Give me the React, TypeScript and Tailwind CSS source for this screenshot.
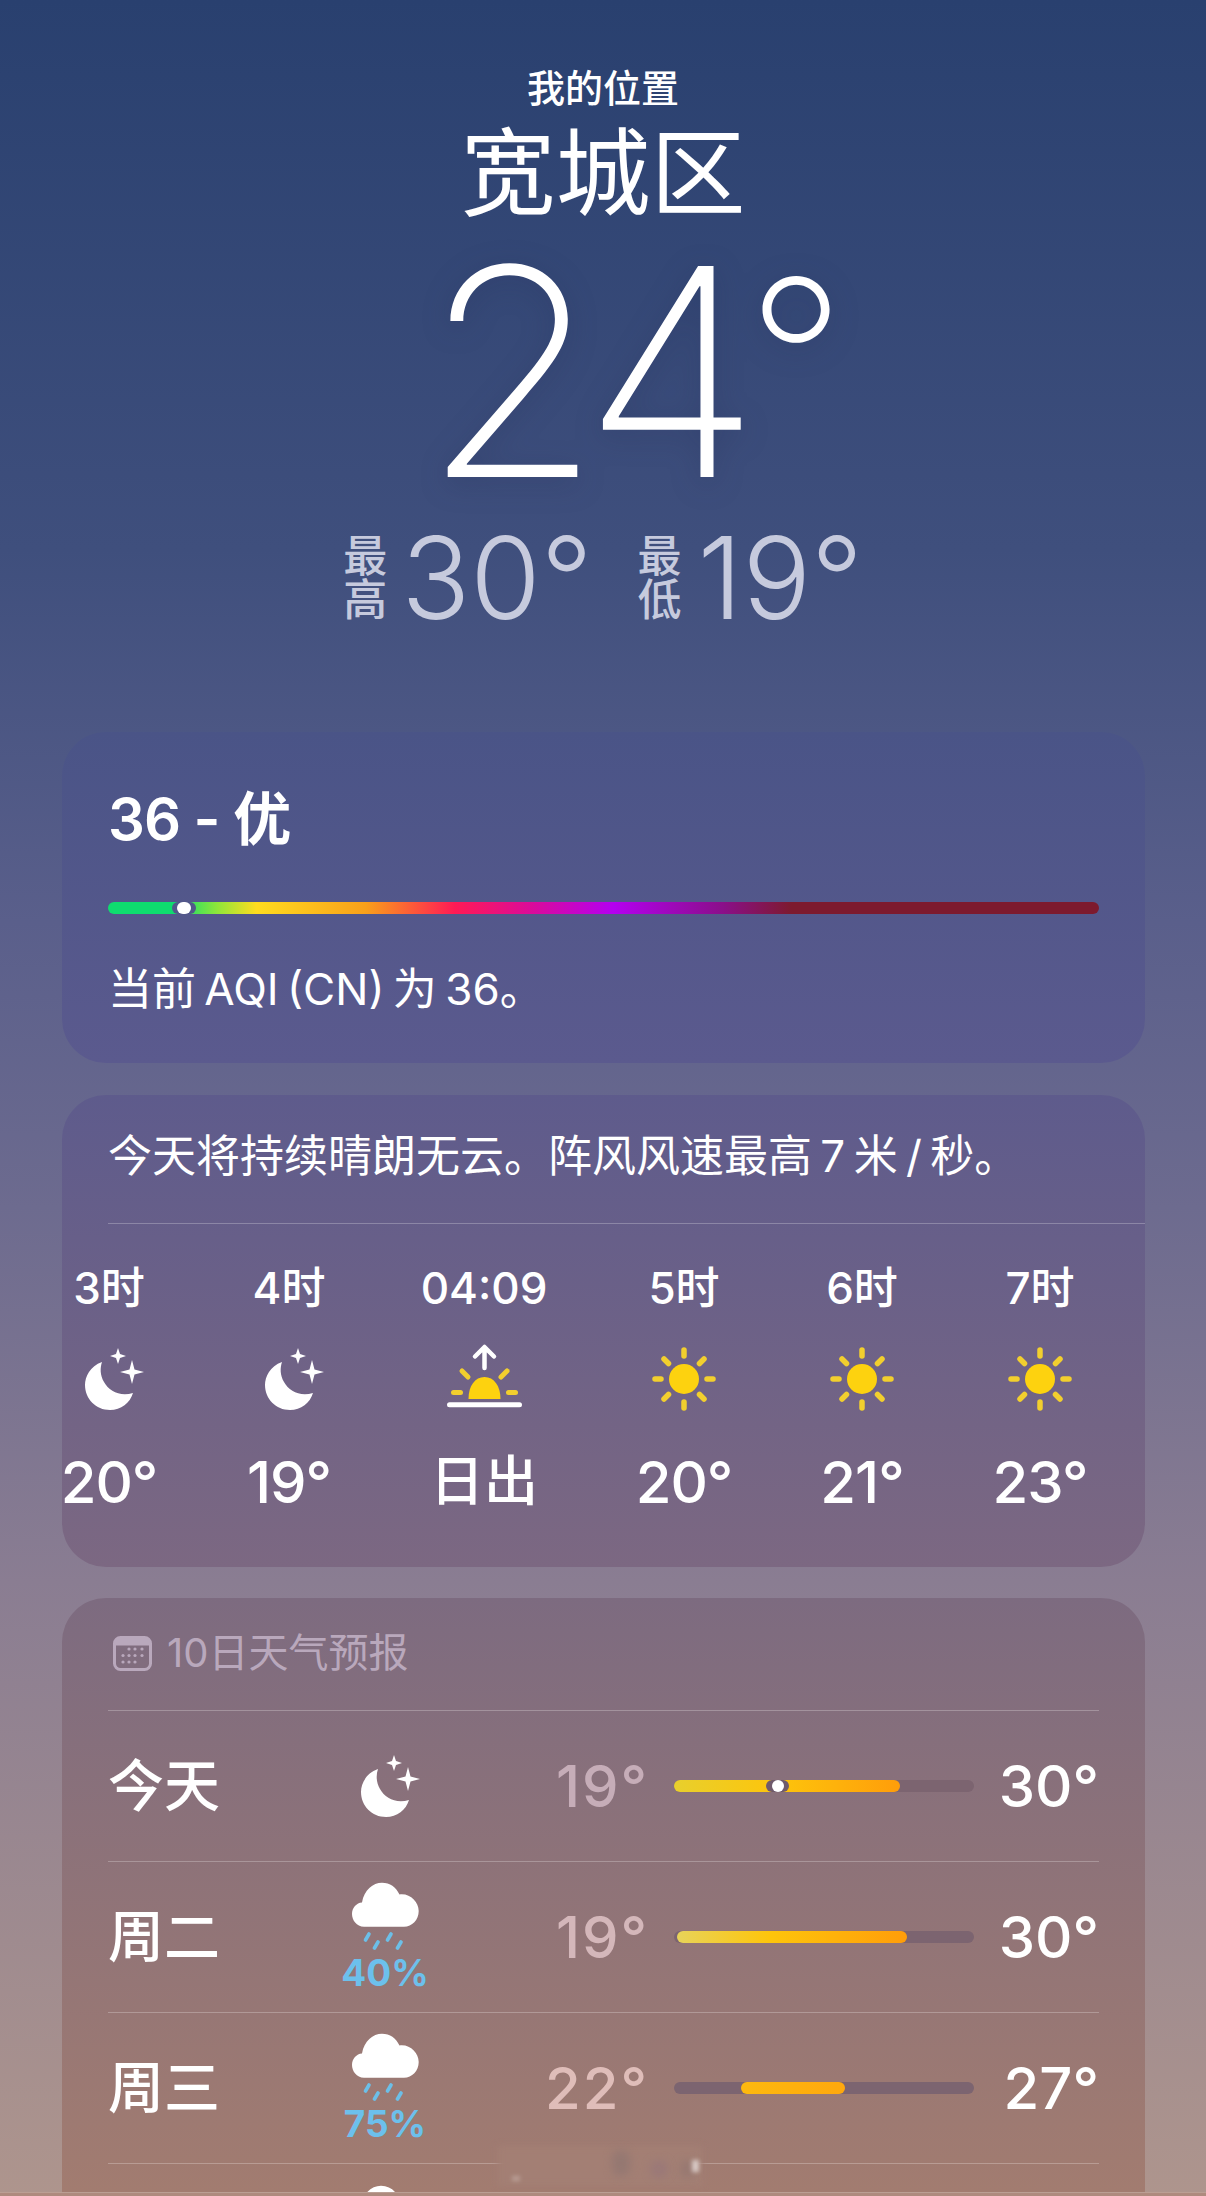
const FONT = 'font-["Inter","Noto_Sans_CJK_SC",sans-serif]';

type Hour = { label: string; icon: 'moon' | 'sunrise' | 'sun'; temp: string; width: string };

const hours: Hour[] = [
  { label: '3时', icon: 'moon', temp: '20°', width: 'w-[94px]' },
  { label: '4时', icon: 'moon', temp: '19°', width: 'w-[94px] ml-[86px]' },
  { label: '04:09', icon: 'sunrise', temp: '日出', width: 'w-[140px] ml-[78px]' },
  { label: '5时', icon: 'sun', temp: '20°', width: 'w-[94px] ml-[83px]' },
  { label: '6时', icon: 'sun', temp: '21°', width: 'w-[94px] ml-[84px]' },
  { label: '7时', icon: 'sun', temp: '23°', width: 'w-[94px] ml-[84px]' },
];

function MoonIcon() {
  return (
    <svg width="72" height="64" viewBox="3 8 72 64" fill="white">
      <path d="M32 23 C20 27 15 38 15 46 C15 60 26 71 40 71 C51 71 60 64 63 54 C50 58 39 52 34 43 C30 36 30 29 32 23 Z" />
      <path d="M48 9 L50 15 L56 17 L50 19 L48 25 L46 19 L40 17 L46 15 Z" />
      <path d="M62 21 L64.5 30.5 L74 33 L64.5 35.5 L62 45 L59.5 35.5 L50 33 L59.5 30.5 Z" />
    </svg>
  );
}

function SunIcon() {
  return (
    <svg width="66" height="66" viewBox="0 0 66 66" fill="none">
      <circle cx="33" cy="33" r="15" fill="#fdd20f" />
      <g stroke="#f2cf2e" strokeWidth="5.5" strokeLinecap="round">
        <path d="M33 4 V10" />
        <path d="M33 56 V62" />
        <path d="M4 33 H10" />
        <path d="M56 33 H62" />
        <path d="M13 13 L17.5 17.5" />
        <path d="M48.5 48.5 L53 53" />
        <path d="M13 53 L17.5 48.5" />
        <path d="M48.5 17.5 L53 13" />
      </g>
    </svg>
  );
}

function SunriseIcon() {
  return (
    <svg width="81" height="72" viewBox="23 4 81 72" fill="none">
      <path d="M47.5 60 C47.5 47 54 38 63.5 38 C73 38 79.5 47 79.5 60 Z" fill="#fdd20f" />
      <g stroke="#f2cf2e" strokeWidth="5" strokeLinecap="round">
        <path d="M32.5 53.5 H39.5" />
        <path d="M87.5 53.5 H94.5" />
        <path d="M41 32 L47 38" />
        <path d="M86 32 L80 38" />
      </g>
      <path d="M63.5 29 V9 M54 17.5 L63.5 8 L73 17.5" stroke="white" strokeWidth="4.5" strokeLinecap="round" strokeLinejoin="round" />
      <path d="M28.5 65.7 H98.5" stroke="white" strokeWidth="5" strokeLinecap="round" />
    </svg>
  );
}

function RainCloud() {
  return (
    <svg width="67" height="68" viewBox="34 22 67 68" fill="none">
      <path
        d="M46 66.7 C38.5 66.7 34 60 34 54 C34 47.5 38.5 43 44 42.5 C46 30 55 22.7 64 22.7 C72 22.7 78 27 81.5 34.5 C92 33 100.7 42 100.7 51 C100.7 60 94 66.7 86 66.7 Z"
        fill="white"
      />
      <g stroke="#6cbfe8" strokeWidth="3.6" strokeLinecap="round">
        <path d="M51 74 L47.5 80" />
        <path d="M73 74 L69.5 80" />
        <path d="M60 82 L56.5 88" />
        <path d="M83 82 L79.5 88" />
      </g>
    </svg>
  );
}

function CalendarIcon() {
  return (
    <svg width="39" height="35" viewBox="0 0 39 35" className="text-[#b9a8bc]" fill="none">
      <rect x="1.5" y="1.5" width="36" height="32" rx="6" stroke="currentColor" strokeWidth="3" />
      <path d="M3 3 H36 V9.5 H3 Z" fill="currentColor" />
      <g fill="currentColor">
        <circle cx="16" cy="13" r="1.6" />
        <circle cx="22" cy="13" r="1.6" />
        <circle cx="29" cy="13" r="1.6" />
        <circle cx="10" cy="19.5" r="1.6" />
        <circle cx="16" cy="19.5" r="1.6" />
        <circle cx="22" cy="19.5" r="1.6" />
        <circle cx="29" cy="19.5" r="1.6" />
        <circle cx="10" cy="26" r="1.6" />
        <circle cx="16" cy="26" r="1.6" />
        <circle cx="22" cy="26" r="1.6" />
      </g>
    </svg>
  );
}

function HourColumn({ hour }: { hour: Hour }) {
  return (
    <div className={`${hour.width} flex flex-col items-center shrink-0`}>
      <div className="h-[44px] text-[44px] leading-[44px] font-medium text-white whitespace-nowrap">{hour.label}</div>
      <div className="h-[66px] mt-[36px] flex items-center justify-center">
        {hour.icon === 'moon' && <MoonIcon />}
        {hour.icon === 'sun' && <SunIcon />}
        {hour.icon === 'sunrise' && <SunriseIcon />}
      </div>
      <div
        className={`mt-[39px] leading-[62px] font-medium text-white whitespace-nowrap ${
          hour.icon === 'sunrise' ? 'text-[54px]' : 'text-[58px] tracking-[-1px]'
        }`}
      >
        {hour.temp}
      </div>
    </div>
  );
}

function DayRow({
  day,
  low,
  high,
  lowColor,
  pop,
  children,
}: {
  day: string;
  low: string;
  high: string;
  lowColor: string;
  pop?: string;
  children: React.ReactNode;
}) {
  return (
    <div className="h-[151px] border-t-[1.5px] border-white/25 flex items-center">
      <div className="w-[217px] text-[56px] font-medium text-white">{day}</div>
      <div className="w-[120px] flex flex-col items-center">
        {pop ? (
          <>
            <RainCloud />
            <div className="mt-[4px] text-[37px] leading-[38px] font-bold text-[#6cc0ec]">{pop}</div>
          </>
        ) : (
          <MoonIcon />
        )}
      </div>
      <div className={`w-[204px] text-right text-[58px] font-medium tracking-[2px] ${lowColor}`}>{low}</div>
      <div className="ml-[25px] w-[300px] h-[12px] rounded-full bg-[#7c6470] relative">{children}</div>
      <div className="ml-auto text-[58px] font-medium text-white">{high}</div>
    </div>
  );
}

export default function App() {
  return (
    <div
      className={`h-[2196px] w-[1206px] overflow-hidden relative bg-[linear-gradient(180deg,#29406f_0%,#3f4f7d_25%,#5a5f8b_42%,#6d6b8f_55%,#8a7d92_72%,#ae958d_100%)] ${FONT}`}
    >
      {/* header */}
      <div className="pt-[66px] flex flex-col items-center text-white">
        <div className="text-[38px] leading-[44px] font-medium">我的位置</div>
        <div className="mt-[10px] text-[95px] leading-[108px] font-normal">宽城区</div>
        <div className="mt-[24px] h-[240px] flex items-start pl-[62px] drop-shadow-[0_6px_14px_rgba(30,40,80,0.25)]">
          <div className="text-[290px] leading-[240px] font-extralight tracking-[-14px]">24</div>
          <div className="mt-[-15px] text-[218px] leading-[240px] font-extralight">°</div>
        </div>
        <div className="mt-[24px] h-[124px] flex items-center text-[#c6cadd]">
          <div className="w-[44px] text-[44px] leading-[44px] font-medium text-center">最高</div>
          <div className="ml-[14px] text-[114px] leading-[124px] font-light">30°</div>
          <div className="ml-[45px] w-[44px] text-[44px] leading-[44px] font-medium text-center">最低</div>
          <div className="ml-[16px] text-[114px] leading-[124px] font-light">19°</div>
        </div>
      </div>

      {/* cards */}
      <div className="absolute left-[62px] top-[732px] w-[1083px] flex flex-col gap-[32px]">
        <div className="h-[331px] rounded-[44px] bg-[linear-gradient(180deg,#4a5487,#5b5a8e)] px-[46px] pt-[55px] text-white">
          <div className="text-[58px] leading-[64px] font-semibold tracking-[-1px]">36 - 优</div>
          <div className="mt-[51px] h-[12px] rounded-full relative bg-[linear-gradient(90deg,#0fdc6f_0%,#0fdc6f_7%,#8ee63a_11%,#ffdc1f_15%,#f9a01a_26%,#ff1a55_35%,#d90b9c_43%,#b400f0_51%,#8a0f8a_62%,#7d1a2e_69%,#7d1a2e_100%)]">
            <div className="absolute left-[64px] top-0 h-[12px] w-[24px] rounded-full bg-[#52578a] flex items-center justify-center">
              <div className="h-[12px] w-[14px] rounded-full bg-white" />
            </div>
          </div>
          <div className="mt-[50px] text-[44px] leading-[50px] font-normal [word-spacing:-4px]">当前 AQI (CN) 为 36。</div>
        </div>

        <div className="h-[472px] rounded-[44px] bg-[linear-gradient(180deg,#5e5b8c,#7c6882)] text-white">
          <div className="h-[128px] pl-[46px] pb-[6px] flex items-center text-[44px] font-normal [word-spacing:-4px]">
            今天将持续晴朗无云。阵风风速最高 7 米 / 秒。
          </div>
          <div className="ml-[46px] border-t-[1.5px] border-white/25" />
          <div className="mt-[42px] flex">
            {hours.map((h, i) => (
              <HourColumn key={i} hour={h} />
            ))}
          </div>
        </div>

        <div className="h-[594px] mt-[-1px] overflow-hidden rounded-t-[44px] bg-[linear-gradient(180deg,#7d6b80,#a27c70)] px-[46px]">
          <div className="h-[112px] flex items-center gap-[15px] pl-[5px] pb-[2px]">
            <CalendarIcon />
            <span className="text-[40px] font-normal text-[#b9a8bc]">10日天气预报</span>
          </div>
          <DayRow day="今天" low="19°" high="30°" lowColor="text-[#c6adb8]">
            <div className="absolute left-0 top-0 h-[12px] w-[226px] rounded-full bg-[linear-gradient(90deg,#e8cf2d,#fdc50c_45%,#ff9d0a)]" />
            <div className="absolute left-[92px] top-0 h-[12px] w-[23px] rounded-full bg-[#6f5a6c] flex items-center justify-center">
              <div className="h-[12px] w-[12px] rounded-full bg-white" />
            </div>
          </DayRow>
          <DayRow day="周二" low="19°" high="30°" lowColor="text-[#d4b7ba]" pop="40%">
            <div className="absolute left-[3px] top-0 h-[12px] w-[230px] rounded-full bg-[linear-gradient(90deg,#e8d35a,#fdc50c_40%,#ff9d0a)]" />
          </DayRow>
          <DayRow day="周三" low="22°" high="27°" lowColor="text-[#dfbdb9]" pop="75%">
            <div className="absolute left-[67px] top-0 h-[12px] w-[104px] rounded-full bg-[linear-gradient(90deg,#fdb90f,#ffa80d)]" />
          </DayRow>
          <div className="border-t-[1.5px] border-white/25 pt-[21px] pl-[243px]">
            <RainCloud />
          </div>
        </div>
      </div>

      {/* blurred watermark over the last row */}
      <div className="absolute left-[498px] top-[2146px] h-[40px] w-[204px] bg-[#a37f74] blur-[3px]" />
      <div className="absolute left-[612px] top-[2150px] h-[26px] w-[18px] rounded-full bg-[#8f7570]/70 blur-[4px]" />
      <div className="absolute left-[650px] top-[2160px] h-[18px] w-[18px] rounded-full bg-[#95757a]/60 blur-[4px]" />
      <div className="absolute left-[680px] top-[2160px] h-[18px] w-[14px] rounded-full bg-[#8f7570]/60 blur-[4px]" />
      <div className="absolute left-[692px] top-[2160px] h-[12px] w-[7px] bg-white/60 blur-[2px]" />
      <div className="absolute left-[512px] top-[2176px] h-[5px] w-[8px] bg-white/25 blur-[2px]" />

      {/* bottom strip */}
      <div className="absolute left-0 right-0 top-[2192px] h-[4px] border-t-[1.5px] border-[#bb9f94] bg-[#ae8a7e]" />
    </div>
  );
}
